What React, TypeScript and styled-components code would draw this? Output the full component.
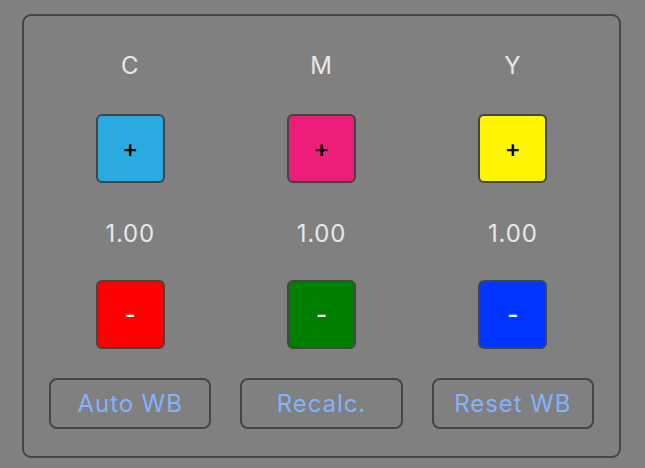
import React from "react";
import styled, { createGlobalStyle } from "styled-components";

const Global = createGlobalStyle`
  html, body { margin: 0; padding: 0; background: #808080; }
  body { font-family: Inter, "Noto Sans", "Liberation Sans", sans-serif; }
`;

const Page = styled.div`
  width: 645px;
  height: 468px;
  background: #808080;
  padding: 14px 0 0 22px;
  box-sizing: border-box;
`;

const Panel = styled.div`
  width: 599px;
  height: 444px;
  box-sizing: border-box;
  border: 2px solid #454545;
  border-radius: 9px;
  padding: 35px 25px 27px 25px;
  display: grid;
  grid-template-columns: repeat(3, 1fr);
  column-gap: 29px;
  grid-template-rows: 1fr auto;
`;

const Column = styled.div`
  display: flex;
  flex-direction: column;
  align-items: center;
`;

const Label = styled.div<{ $gap: number }>`
  height: 30px;
  line-height: 30px;
  font-size: 24px;
  letter-spacing: 0.8px;
  color: #e8e8e8;
  margin-bottom: ${(p) => p.$gap}px;
`;

const Square = styled.button<{ $bg: string; $fg: string; $gap: number }>`
  width: 69px;
  height: 69px;
  box-sizing: border-box;
  border: 2px solid #444;
  border-radius: 6px;
  background: ${(p) => p.$bg};
  color: ${(p) => p.$fg};
  font-family: inherit;
  font-size: 24px;
  font-weight: 500;
  padding: 0;
  display: flex;
  align-items: center;
  justify-content: center;
  margin-bottom: ${(p) => p.$gap}px;
`;

const ActionButton = styled.button`
  height: 51px;
  box-sizing: border-box;
  border: 2px solid #454545;
  border-radius: 8px;
  background: transparent;
  color: #84b3fb;
  font-family: inherit;
  font-size: 24px;
  letter-spacing: 0.9px;
  padding: 0;
`;

const channels = [
  { name: "C", plus: "#29abe2", minus: "#ff0000", value: "1.00" },
  { name: "M", plus: "#ed1e79", minus: "#008000", value: "1.00" },
  { name: "Y", plus: "#fff500", minus: "#0036ff", value: "1.00" },
];

export default function App() {
  return (
    <Page>
      <Global />
      <Panel>
        {channels.map((c) => (
          <Column key={c.name}>
            <Label $gap={33}>{c.name}</Label>
            <Square $bg={c.plus} $fg="#000" $gap={36}>+</Square>
            <Label $gap={31}>{c.value}</Label>
            <Square $bg={c.minus} $fg="#fff" $gap={0}>-</Square>
          </Column>
        ))}
        <ActionButton>Auto WB</ActionButton>
        <ActionButton>Recalc.</ActionButton>
        <ActionButton>Reset WB</ActionButton>
      </Panel>
    </Page>
  );
}
